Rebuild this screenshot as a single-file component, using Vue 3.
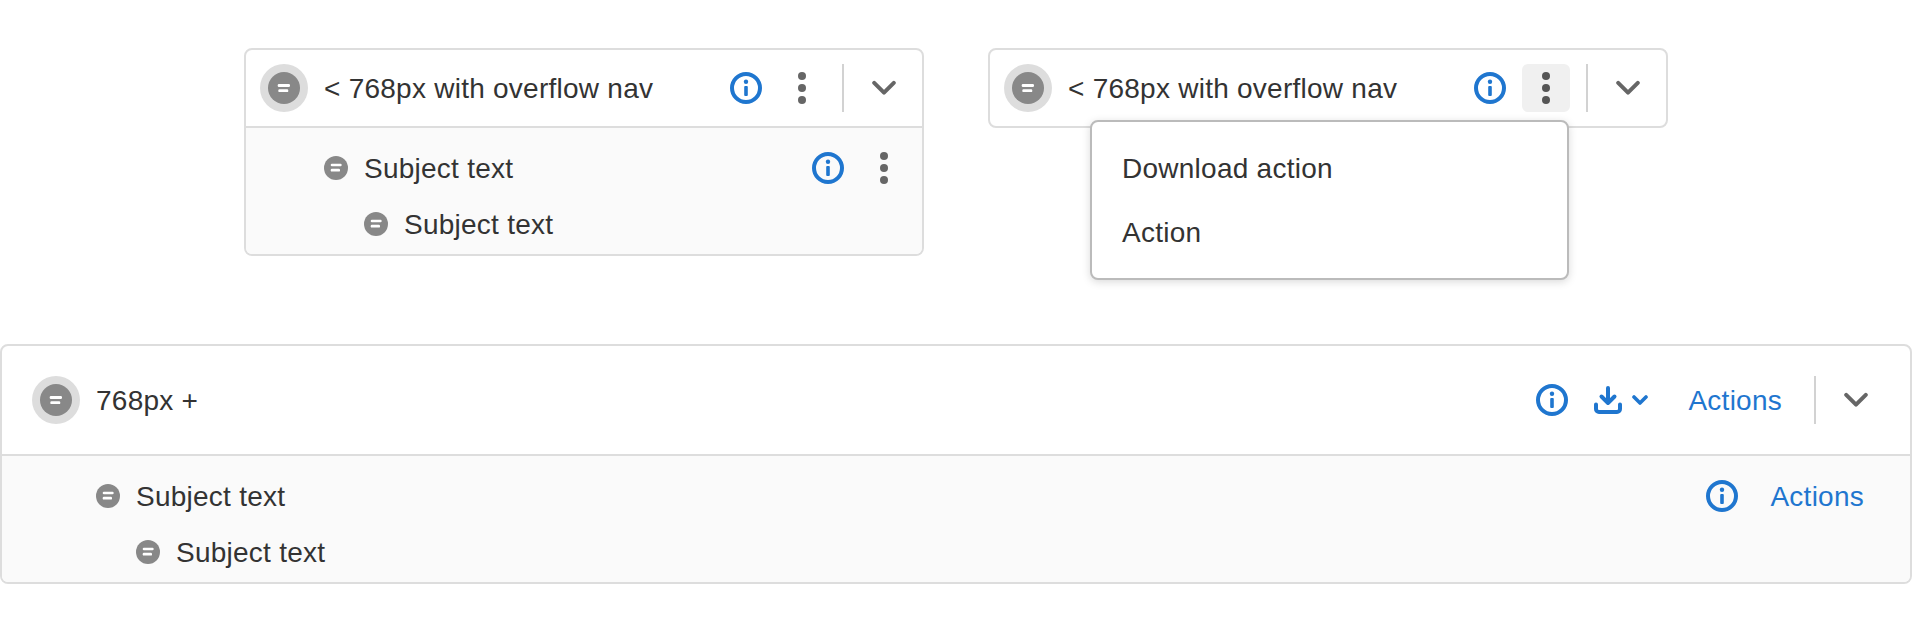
<template>
  <div class="page">
    <svg class="defs" aria-hidden="true">
      <symbol id="status" viewBox="0 0 24 24">
        <circle cx="12" cy="12" r="12" fill="#888" />
        <rect x="6.700" y="7.700" width="11" height="2.600" rx="1.200" fill="#fff" />
        <rect x="6.700" y="12.800" width="9.300" height="2.800" rx="1.200" fill="#fff" />
      </symbol>
      <symbol id="status-big" viewBox="0 0 32 32">
        <circle cx="16" cy="16" r="16" fill="#888" />
        <rect x="9.700" y="12" width="12.300" height="3" rx="1.200" fill="#fff" />
        <rect x="10.300" y="17.300" width="10" height="2.800" rx="1.200" fill="#fff" />
      </symbol>
      <symbol id="info" viewBox="0 0 32 32">
        <circle cx="16" cy="16" r="14" fill="none" stroke="currentColor" stroke-width="4" />
        <circle cx="16" cy="9.800" r="2.200" fill="currentColor" />
        <rect x="14.200" y="14" width="3.600" height="10" rx="1" fill="currentColor" />
      </symbol>
      <symbol id="kebab" viewBox="0 0 8 32">
        <circle cx="4" cy="4" r="4" fill="currentColor" />
        <circle cx="4" cy="16" r="4" fill="currentColor" />
        <circle cx="4" cy="28" r="4" fill="currentColor" />
      </symbol>
      <symbol id="chevron" viewBox="0 0 24 16">
        <path d="M2.200 2.800L12 12.600l9.800-9.800" fill="none" stroke="currentColor" stroke-width="4" stroke-linecap="round" stroke-linejoin="round" />
      </symbol>
      <symbol id="chevron-small" viewBox="0 0 16 11">
        <path d="M2 2l6 6 6-6" fill="none" stroke="currentColor" stroke-width="3.600" stroke-linecap="round" stroke-linejoin="round" />
      </symbol>
      <symbol id="download" viewBox="0 0 28 28">
        <path d="M14 2v15M7.500 10.500L14 17l6.500-6.500" fill="none" stroke="currentColor" stroke-width="4" stroke-linecap="round" stroke-linejoin="round" />
        <path d="M2 18.500v4.500a3 3 0 0 0 3 3h18a3 3 0 0 0 3-3v-4.500" fill="none" stroke="currentColor" stroke-width="4" stroke-linecap="round" />
      </symbol>
    </svg>

    <div class="narrow-row">
      <div class="card">
        <div class="head">
          <span class="status-ring"><svg class="status-big"><use href="#status-big" /></svg></span>
          <span class="title">&lt; 768px with overflow nav</span>
          <button class="icon-btn blue"><svg class="i32"><use href="#info" /></svg></button>
          <button class="icon-btn grey"><svg class="kebab"><use href="#kebab" /></svg></button>
          <span class="sep"></span>
          <button class="icon-btn grey"><svg class="chev"><use href="#chevron" /></svg></button>
        </div>
        <div class="body">
          <div class="row">
            <svg class="status-small"><use href="#status" /></svg>
            <span class="title">Subject text</span>
            <button class="icon-btn blue"><svg class="i32"><use href="#info" /></svg></button>
            <button class="icon-btn grey"><svg class="kebab"><use href="#kebab" /></svg></button>
          </div>
          <div class="row nested">
            <svg class="status-small"><use href="#status" /></svg>
            <span class="title">Subject text</span>
          </div>
        </div>
      </div>

      <div class="card closed">
        <div class="head">
          <span class="status-ring"><svg class="status-big"><use href="#status-big" /></svg></span>
          <span class="title">&lt; 768px with overflow nav</span>
          <button class="icon-btn blue"><svg class="i32"><use href="#info" /></svg></button>
          <button class="icon-btn grey active"><svg class="kebab"><use href="#kebab" /></svg></button>
          <span class="sep"></span>
          <button class="icon-btn grey"><svg class="chev"><use href="#chevron" /></svg></button>
        </div>
        <div class="menu">
          <div class="menu-item">Download action</div>
          <div class="menu-item">Action</div>
        </div>
      </div>
    </div>

    <div class="card wide">
      <div class="head">
        <span class="status-ring"><svg class="status-big"><use href="#status-big" /></svg></span>
        <span class="title">768px +</span>
        <button class="icon-btn blue"><svg class="i32"><use href="#info" /></svg></button>
        <button class="icon-btn blue dl">
          <svg class="dl-icon"><use href="#download" /></svg>
          <svg class="dl-chev"><use href="#chevron-small" /></svg>
        </button>
        <a class="link">Actions</a>
        <span class="sep"></span>
        <button class="icon-btn grey"><svg class="chev"><use href="#chevron" /></svg></button>
      </div>
      <div class="body">
        <div class="row">
          <svg class="status-small"><use href="#status" /></svg>
          <span class="title">Subject text</span>
          <button class="icon-btn blue"><svg class="i32"><use href="#info" /></svg></button>
          <a class="link">Actions</a>
        </div>
        <div class="row nested">
          <svg class="status-small"><use href="#status" /></svg>
          <span class="title">Subject text</span>
        </div>
      </div>
    </div>
  </div>
</template>

<script setup>
</script>

<style>
html, body {
  background: #fff;
}
</style>

<style scoped>
.page {
  padding-top: 48px;
  font-family: "Liberation Sans", Arial, sans-serif;
  font-size: 28px;
  letter-spacing: 0.25px;
  color: #333;
}
.defs {
  display: none;
}
.narrow-row {
  display: flex;
  align-items: flex-start;
  gap: 64px;
  padding-left: 244px;
  margin-bottom: 88px;
}
.card {
  position: relative;
  width: 680px;
  box-sizing: border-box;
  border: 2px solid #ddd;
  border-radius: 8px;
}
.card.wide {
  width: 1912px;
}
.head {
  display: flex;
  align-items: center;
  gap: 8px;
  height: 78px;
  box-sizing: border-box;
  padding: 0 14px;
  border-bottom: 2px solid #ddd;
}
.closed .head {
  height: 76px;
  border-bottom: 0;
}
.wide .head {
  height: 110px;
  padding: 0 30px;
}
.body {
  padding: 12px 14px 2px 78px;
  background: #fafafa;
  border-radius: 0 0 6px 6px;
}
.wide .body {
  padding: 12px 30px 2px 94px;
}
.row {
  display: flex;
  align-items: center;
  gap: 8px;
  height: 56px;
}
.nested {
  padding-left: 40px;
}
.title {
  flex: 1;
  margin-left: 8px;
  padding-top: 2px;
  white-space: nowrap;
}
.status-ring {
  display: flex;
  align-items: center;
  justify-content: center;
  flex: none;
  width: 48px;
  height: 48px;
  border-radius: 50%;
  background: #ddd;
}
.status-big {
  width: 32px;
  height: 32px;
}
.status-small {
  flex: none;
  width: 24px;
  height: 24px;
}
.icon-btn {
  display: flex;
  align-items: center;
  justify-content: center;
  flex: none;
  width: 48px;
  height: 48px;
  padding: 0;
  border: 0;
  border-radius: 6px;
  background: none;
}
.blue {
  color: #1f76cf;
}
.grey {
  color: #666;
}
.active {
  background: #f0f0f0;
  color: #555;
}
.i32 {
  width: 32px;
  height: 32px;
}
.kebab {
  width: 8px;
  height: 32px;
}
.chev {
  width: 24px;
  height: 16px;
}
.dl {
  justify-content: flex-start;
  width: 80px;
  gap: 10px;
  padding-left: 10px;
  box-sizing: border-box;
}
.dl-icon {
  width: 28px;
  height: 28px;
}
.dl-chev {
  width: 16px;
  height: 11px;
}
.sep {
  flex: none;
  width: 2px;
  height: 48px;
  margin: 0 8px;
  background: #d2d2d2;
}
.link {
  padding: 2px 16px 0;
  color: #1f76cf;
  white-space: nowrap;
}
.menu {
  position: absolute;
  top: 70px;
  left: 100px;
  width: 479px;
  box-sizing: border-box;
  padding: 14px 0;
  background: #fff;
  border: 2px solid #bbb;
  border-radius: 8px;
  box-shadow: 0 2px 8px rgba(0, 0, 0, 0.15);
}
.menu-item {
  display: flex;
  align-items: center;
  height: 64px;
  padding-left: 30px;
  padding-top: 2px;
  box-sizing: border-box;
}
</style>
